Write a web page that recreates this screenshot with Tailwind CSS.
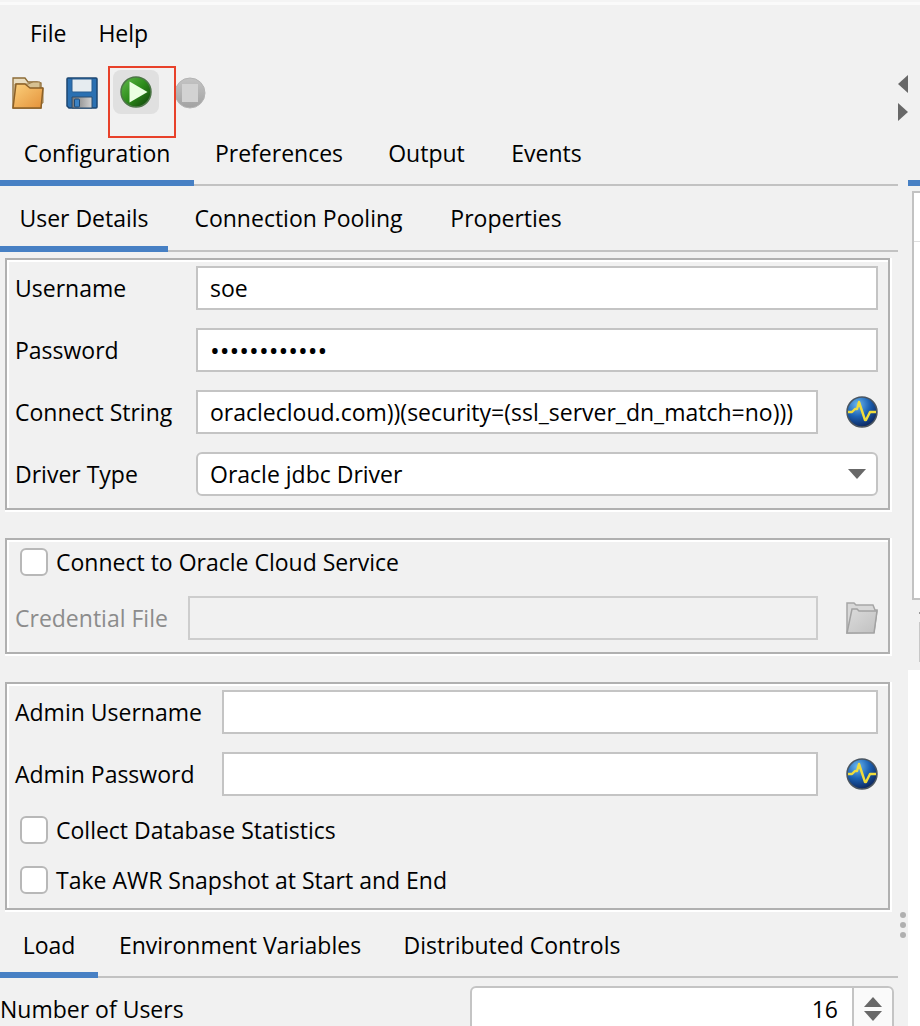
<!DOCTYPE html>
<html lang="en">
<head>
<meta charset="utf-8">
<meta name="viewport" content="width=device-width, initial-scale=1">
<title>Load Configuration</title>
<script src="https://cdn.jsdelivr.net/npm/@tailwindcss/browser@4"></script>
</head>
<body class="flex h-screen overflow-hidden bg-[#f1f1f1] font-['Open_Sans','Noto_Sans',sans-serif] text-[23px] leading-8 text-black">

<svg class="absolute size-0" aria-hidden="true">
  <defs>
    <radialGradient id="blue" cx="35%" cy="25%" r="80%"><stop offset="0" stop-color="#6bb8f0"/><stop offset=".5" stop-color="#1c62b4"/><stop offset="1" stop-color="#0c2358"/></radialGradient>
    <linearGradient id="green" x1="0" y1="0" x2="1" y2="1"><stop offset="0" stop-color="#62bb4c"/><stop offset=".5" stop-color="#2d8c1b"/><stop offset="1" stop-color="#0d3d08"/></linearGradient>
    <linearGradient id="orange" x1="0" y1="0" x2="1" y2="1"><stop offset="0" stop-color="#fbd07c"/><stop offset="1" stop-color="#e4923a"/></linearGradient>
    <linearGradient id="metal" x1="0" y1="0" x2="1" y2="0"><stop offset="0" stop-color="#777"/><stop offset="1" stop-color="#d2d2d2"/></linearGradient>
    <linearGradient id="gray" x1="0" y1="0" x2="0" y2="1"><stop offset="0" stop-color="#c4c4c4"/><stop offset="1" stop-color="#a2a2a2"/></linearGradient>
    <linearGradient id="silver" x1="0" y1="0" x2="1" y2="1"><stop offset="0" stop-color="#dcdcdc"/><stop offset="1" stop-color="#c0c0c0"/></linearGradient>
    <symbol id="pulse" viewBox="0 0 32 32">
      <circle cx="16" cy="16" r="15" fill="url(#blue)" stroke="#4a5560" stroke-width="1.500"/>
      <path d="M2 16h4l3-3h2l2-7 6 18h1l4-8h6" fill="none" stroke="#f0dc3c" stroke-width="2.400" stroke-linejoin="round"/>
    </symbol>
  </defs>
</svg>

<main class="flex min-w-0 flex-1 flex-col">
  <div class="h-[5px] shrink-0 border-t-2 border-[#f4f4f4] bg-[#fafafa]"></div>
  <nav aria-label="Menu" class="flex h-[45px] shrink-0 items-end gap-8 px-[30px] pb-px">
    <button type="button">File</button>
    <button type="button">Help</button>
  </nav>

  <div role="toolbar" aria-label="Actions" class="relative flex h-[84px] shrink-0 items-start pt-[20px] pl-[5px]">
    <button type="button" aria-label="Open" class="flex h-[45px] w-[54px] items-center pl-[7px]">
      <svg class="size-8" viewBox="0 0 32 32"><path d="M1 31V1h12l3 4h9l4 1v25z" fill="#e9ddc0" stroke="#8c6b36" stroke-width="1.300"/><path d="M3 30V7h13l5-2h7v6h3v15z" fill="#d6c192" stroke="#9b7a45"/><path d="M1 31L4 7h9l5 4h13l-2 20z" fill="url(#orange)" stroke="#8c6027" stroke-width="1.500" stroke-linejoin="round"/></svg>
    </button>
    <button type="button" aria-label="Save" class="flex h-[45px] w-[54px] items-center pl-[7px]">
      <svg class="size-8" viewBox="0 0 32 32"><path d="M2 1h28q1 0 1 1v28q0 1-1 1H3l-2-2V2q0-1 1-1z" fill="#2a70b2" stroke="#1c4570" stroke-width="1.500"/><path d="M6 2h20v12q0 1-1 1H7q-1 0-1-1z" fill="#e6ecf0" stroke="#285d90"/><path d="M6 20h20v11H6z" fill="url(#metal)" stroke="#294c70"/><rect x="8.500" y="22" width="5" height="8" rx="1" fill="#3b82c4" stroke="#1d4a78"/></svg>
    </button>
    <button type="button" aria-label="Start" class="flex h-11 w-[46px] items-center justify-center rounded-lg bg-[#e0e0e0]">
      <svg class="size-8" viewBox="0 0 32 32"><circle cx="16" cy="16" r="15" fill="url(#green)" stroke="#4d7548" stroke-width="1.500"/><path d="M9.500 5.500v21L27.500 16z" fill="#eaffe2"/></svg>
    </button>
    <button type="button" aria-label="Stop" disabled class="flex h-[45px] w-[54px] items-center pl-[15px]">
      <svg class="size-8" viewBox="0 0 32 32"><circle cx="16" cy="16" r="15" fill="url(#gray)" stroke="#b4b4b4"/><path d="M8 7h16v18H8z" fill="#d2d2d2"/></svg>
    </button>
    <div class="pointer-events-none absolute top-[16px] left-[108px] h-[72px] w-[68px] border-2 border-[#e8412a]"></div>
  </div>

  <div role="tablist" class="mr-[10px] flex h-[52px] shrink-0 border-b-2 border-[#c2c2c2]">
    <button role="tab" aria-selected="true" type="button" class="-mb-[2px] w-[194px] border-b-6 border-[#4780c4] pb-2">Configuration</button>
    <button role="tab" type="button" class="w-[170px] pb-3">Preferences</button>
    <button role="tab" type="button" class="w-[125px] pb-3">Output</button>
    <button role="tab" type="button" class="w-[115px] pb-3">Events</button>
  </div>
  <div role="tablist" class="mr-[10px] flex h-[66px] shrink-0 border-b-2 border-[#c2c2c2]">
    <button role="tab" aria-selected="true" type="button" class="-mb-[2px] w-[168px] border-b-6 border-[#4780c4] pt-1">User Details</button>
    <button role="tab" type="button" class="w-[261px]">Connection Pooling</button>
    <button role="tab" type="button" class="w-[154px]">Properties</button>
  </div>

  <section class="mt-[6px] mr-[18px] ml-[5px] flex shrink-0 flex-col gap-[18px] border-2 border-[#b0b0b0] pt-[6px] pr-[10px] pb-[12px] pl-2 shadow-[1px_1px_0_1px_#fff,inset_2px_2px_0_#fff]">
    <div class="flex h-11 items-center">
      <label for="user" class="w-[181px] shrink-0">Username</label>
      <input id="user" type="text" value="soe" class="h-full min-w-0 flex-1 border-2 border-[#c4c4c4] bg-white px-3">
    </div>
    <div class="flex h-11 items-center">
      <label for="pass" class="w-[181px] shrink-0">Password</label>
      <input id="pass" type="password" value="swingbench12" class="h-full min-w-0 flex-1 border-2 border-[#c4c4c4] bg-white px-3 text-[26px]">
    </div>
    <div class="flex h-11 items-center">
      <label for="conn" class="w-[181px] shrink-0">Connect String</label>
      <input id="conn" type="text" value="oraclecloud.com))(security=(ssl_server_dn_match=no)))" class="h-full min-w-0 flex-1 border-2 border-[#c4c4c4] bg-white pl-3">
      <button type="button" aria-label="Test connection" class="ml-7 size-8"><svg class="size-8"><use href="#pulse"/></svg></button>
    </div>
    <div class="relative flex h-11 items-center">
      <label for="driver" class="w-[181px] shrink-0">Driver Type</label>
      <select id="driver" class="h-full min-w-0 flex-1 appearance-none rounded-md border-2 border-[#c4c4c4] bg-white px-3"><option>Oracle jdbc Driver</option></select>
      <svg class="pointer-events-none absolute right-3 h-[10px] w-[18px]" viewBox="0 0 18 10"><path d="M0 0h18L9 10z" fill="#686868"/></svg>
    </div>
  </section>

  <section class="mt-[28px] mr-[18px] ml-[5px] flex shrink-0 flex-col border-2 border-[#b0b0b0] pt-[6px] pr-[10px] pb-[12px] pl-2 shadow-[1px_1px_0_1px_#fff,inset_2px_2px_0_#fff]">
    <label class="flex items-center gap-2 pl-[5px]"><input type="checkbox" class="size-7 appearance-none rounded-md border-2 border-[#b8b8b8] bg-white">Connect to Oracle Cloud Service</label>
    <div class="mt-[18px] flex h-11 items-center text-[#8c8c8c]">
      <label for="cred" class="w-[173px] shrink-0">Credential File</label>
      <input id="cred" type="text" disabled class="h-full min-w-0 flex-1 border-2 border-[#cdcdcd] bg-[#f1f1f1] px-3">
      <button type="button" aria-label="Browse" disabled class="ml-7 size-8"><svg class="size-8" viewBox="0 0 32 32"><path d="M1 31V1h7l2 2h17l2 5h2l-3 22z" fill="#d8d8d8" stroke="#a6a6a6" stroke-width="1.500"/><path d="M1 31L6 7h5l2 2h18l-3 22z" fill="url(#silver)" stroke="#a2a2a2" stroke-width="1.500"/></svg></button>
    </div>
  </section>

  <section class="mt-[28px] mr-[18px] ml-[5px] flex shrink-0 flex-col border-2 border-[#b0b0b0] pt-[6px] pr-[10px] pb-[12px] pl-2 shadow-[1px_1px_0_1px_#fff,inset_2px_2px_0_#fff]">
    <div class="flex h-11 items-center">
      <label for="auser" class="w-[207px] shrink-0">Admin Username</label>
      <input id="auser" type="text" class="h-full min-w-0 flex-1 border-2 border-[#c4c4c4] bg-white px-3">
    </div>
    <div class="mt-[18px] flex h-11 items-center">
      <label for="apass" class="w-[207px] shrink-0">Admin Password</label>
      <input id="apass" type="password" class="h-full min-w-0 flex-1 border-2 border-[#c4c4c4] bg-white px-3">
      <button type="button" aria-label="Test admin connection" class="ml-7 size-8"><svg class="size-8"><use href="#pulse"/></svg></button>
    </div>
    <label class="mt-[18px] flex items-center gap-2 pl-[5px]"><input type="checkbox" class="size-7 appearance-none rounded-md border-2 border-[#b8b8b8] bg-white">Collect Database Statistics</label>
    <label class="mt-[18px] flex items-center gap-2 pl-[5px]"><input type="checkbox" class="size-7 appearance-none rounded-md border-2 border-[#b8b8b8] bg-white">Take AWR Snapshot at Start and End</label>
  </section>

  <div role="tablist" class="mr-[10px] flex h-[68px] shrink-0 border-b-2 border-[#c2c2c2]">
    <button role="tab" aria-selected="true" type="button" class="-mb-[2px] w-[98px] border-b-6 border-[#4780c4] pt-2">Load</button>
    <button role="tab" type="button" class="w-[284px] pt-1">Environment Variables</button>
    <button role="tab" type="button" class="w-[260px] pt-1">Distributed Controls</button>
  </div>
  <div class="mt-2 mr-[14px] flex h-[46px] shrink-0 items-center">
    <label for="users" class="flex-1">Number of Users</label>
    <div class="flex h-full w-[424px] rounded-md border-2 border-[#c4c4c4] bg-white">
      <input id="users" type="text" inputmode="numeric" value="16" class="min-w-0 flex-1 pr-[14px] text-right">
      <div class="flex w-10 flex-col items-center justify-center gap-1 rounded-r-md border-l-2 border-[#c4c4c4] bg-[#fafafa]">
        <button type="button" aria-label="Increase"><svg class="h-[10px] w-[18px]" viewBox="0 0 18 10"><path d="M0 10h18L9 0z" fill="#686868"/></svg></button>
        <button type="button" aria-label="Decrease"><svg class="h-[10px] w-[18px]" viewBox="0 0 18 10"><path d="M0 0h18L9 10z" fill="#686868"/></svg></button>
      </div>
    </div>
  </div>
</main>

<div class="absolute top-[75px] right-3 flex flex-col gap-[10px]">
  <button type="button" aria-label="Collapse left"><svg class="h-[18px] w-[10px]" viewBox="0 0 10 18"><path d="M10 0v18L0 9z" fill="#686868"/></svg></button>
  <button type="button" aria-label="Collapse right"><svg class="h-[18px] w-[10px]" viewBox="0 0 10 18"><path d="M0 0v18l10-9z" fill="#686868"/></svg></button>
</div>
<div class="absolute top-[912px] right-[14px] flex flex-col gap-1">
  <span class="size-[6px] rounded-full bg-[#b0b0b0]"></span>
  <span class="size-[6px] rounded-full bg-[#b0b0b0]"></span>
  <span class="size-[6px] rounded-full bg-[#b0b0b0]"></span>
</div>

<aside class="flex w-3 shrink-0 flex-col">
  <div class="h-[5px] border-t-2 border-[#f4f4f4] bg-[#fafafa]"></div>
  <div class="mt-[175px] h-[6px] bg-[#4780c4]"></div>
  <div class="mt-[5px] ml-1 h-[409px] border-2 border-r-0 border-[#c2c2c2] bg-white"><div class="h-[49px] border-b border-[#dedede]"></div></div>
  <div class="mt-[12px] ml-[11px] h-[2px] bg-[#999]"></div>
  <div class="mt-[8px] ml-[11px] h-10 bg-[#c8c8c8]"></div>
  <div class="mt-2 flex-1 bg-white"></div>
</aside>
</body>
</html>
